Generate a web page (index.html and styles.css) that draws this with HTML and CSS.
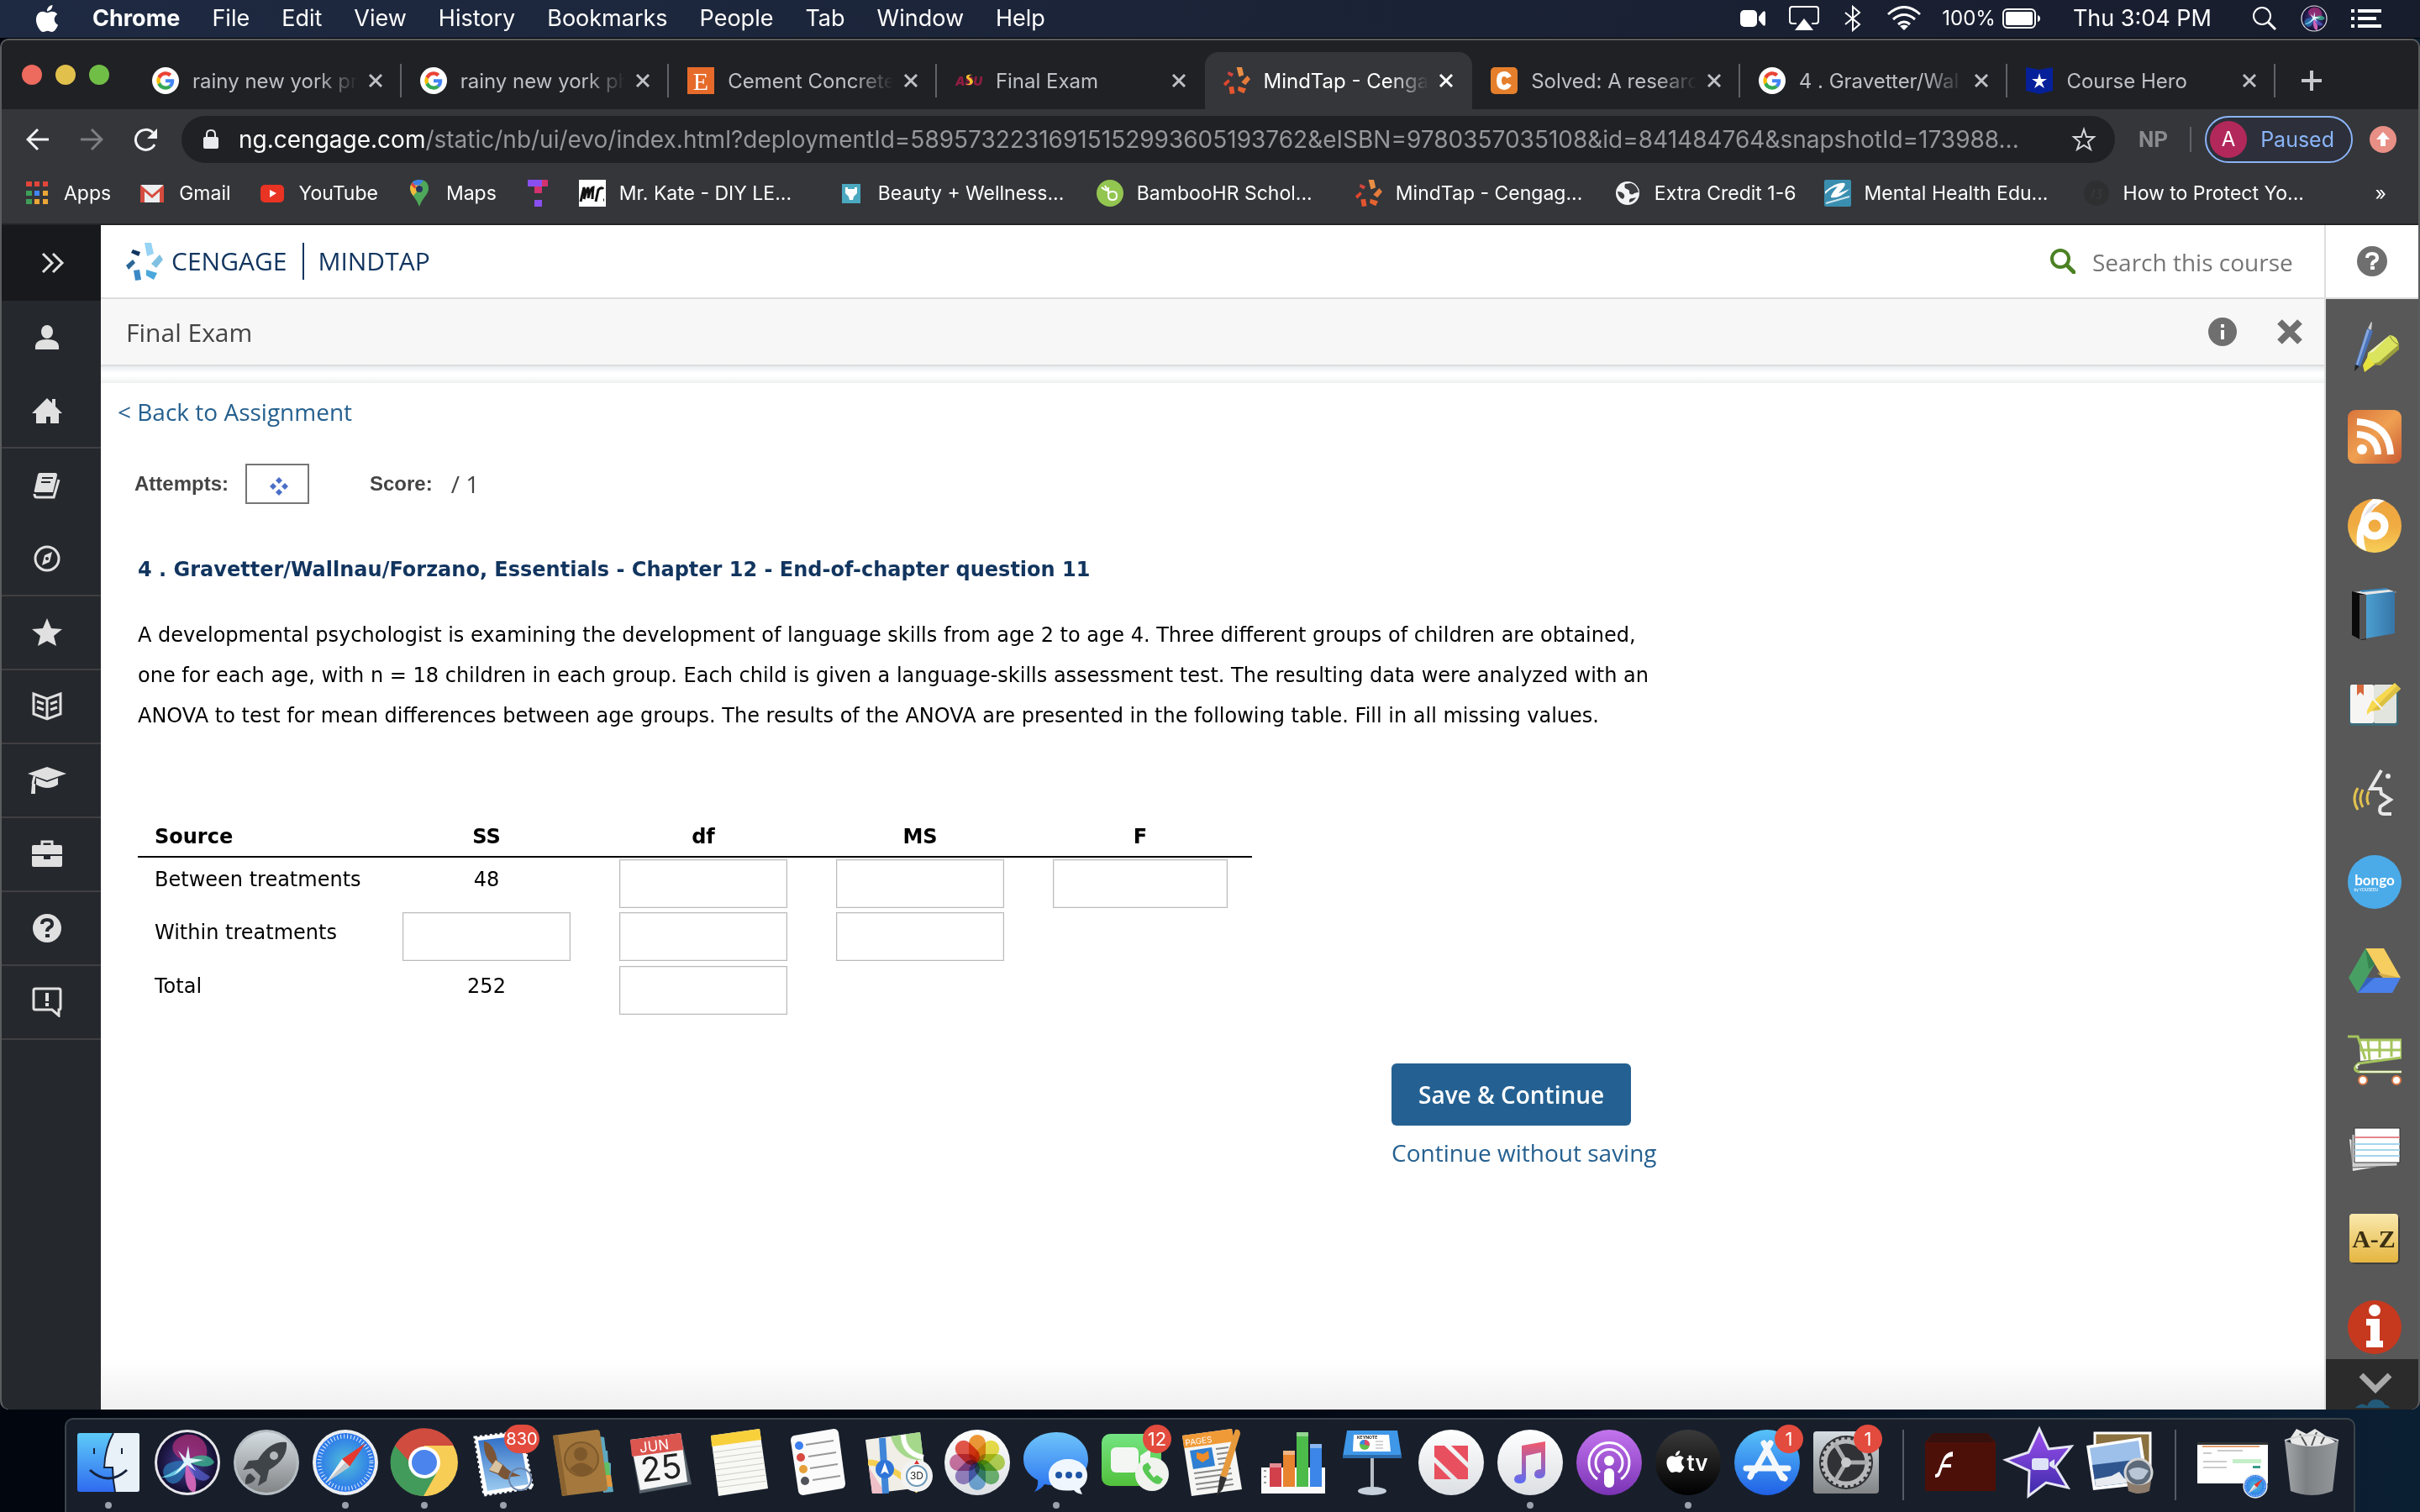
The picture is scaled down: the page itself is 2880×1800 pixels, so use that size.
FILE: index.html
```html
<!DOCTYPE html>
<html lang="en">
<head>
    <meta charset="UTF-8">
    <meta name="viewport" content="width=device-width, initial-scale=1.0">
    <title>MindTap - Cengage Learning</title>
    <link rel="stylesheet" href="styles.css">
</head>
<body>
    <!-- shared shapes and gradients -->
    <svg class="defs" width="0" height="0" aria-hidden="true">
        <defs>
            <symbol id="apple" viewBox="0 0 24 24"><path d="M12.152 6.896c-.948 0-2.415-1.078-3.96-1.04-2.04.027-3.91 1.183-4.961 3.014-2.117 3.675-.546 9.103 1.519 12.09 1.013 1.454 2.208 3.09 3.792 3.039 1.52-.065 2.09-.987 3.935-.987 1.831 0 2.35.987 3.96.948 1.637-.026 2.676-1.48 3.676-2.948 1.156-1.688 1.636-3.325 1.662-3.415-.039-.013-3.182-1.221-3.22-4.857-.026-3.04 2.48-4.494 2.597-4.559-1.429-2.09-3.623-2.324-4.39-2.376-2-.156-3.675 1.09-4.61 1.09zM15.53 3.83c.843-1.012 1.4-2.427 1.245-3.83-1.207.052-2.662.805-3.532 1.818-.78.896-1.454 2.338-1.273 3.714 1.338.104 2.715-.688 3.559-1.701"/></symbol>
            <symbol id="google" viewBox="-12 -12 72 72">
                <circle cx="24" cy="24" r="36" fill="#fff"/>
                <path fill="#ea4335" d="M24 9.5c3.54 0 6.71 1.22 9.21 3.6l6.85-6.85C35.9 2.38 30.47 0 24 0 14.62 0 6.51 5.38 2.56 13.22l7.98 6.19C12.43 13.72 17.74 9.5 24 9.5z"/>
                <path fill="#4285f4" d="M46.98 24.55c0-1.57-.15-3.09-.38-4.55H24v9.02h12.94c-.58 2.96-2.26 5.48-4.78 7.18l7.73 6c4.51-4.18 7.09-10.36 7.09-17.65z"/>
                <path fill="#fbbc05" d="M10.53 28.59c-.48-1.45-.76-2.99-.76-4.59s.27-3.14.76-4.59l-7.98-6.19C.92 16.46 0 20.12 0 24c0 3.88.92 7.54 2.56 10.78l7.97-6.19z"/>
                <path fill="#34a853" d="M24 48c6.48 0 11.93-2.13 15.89-5.81l-7.73-6c-2.15 1.45-4.92 2.3-8.16 2.3-6.26 0-11.57-4.22-13.47-9.91l-7.98 6.19C6.51 42.62 14.62 48 24 48z"/>
            </symbol>
            <symbol id="mindtap" viewBox="0 0 45 45">
                <path fill="#e98f45" d="M22 0h9l3 13-8 3z"/><path fill="#d6453d" d="M8 7l9 4-3 5-7-4z"/><path fill="#e0472e" d="M0 27l8-7 3 4-8 8z"/>
                <path fill="#e3552f" d="M9 33l8-1 2 12-8 1z"/><path fill="#e5632f" d="M25 32l13 4-4 8-10-5z"/><path fill="#e67c3b" d="M40 14l5 6-8 10-7-5z"/>
            </symbol>
            <symbol id="close" viewBox="0 0 18 18"><path d="M2 2l14 14M16 2L2 16" fill="none" stroke="currentColor" stroke-width="3"/></symbol>
            <symbol id="safari" viewBox="0 0 80 80">
                <circle cx="40" cy="40" r="39" fill="#eceef0"/><circle cx="40" cy="40" r="35" fill="url(#gSafari)"/>
                <circle cx="40" cy="40" r="31" fill="none" stroke="#e8f4ff" stroke-width="5" stroke-dasharray="1 3"/>
                <path d="M64 17L45 45l-9-9z" fill="#e5392f"/><path d="M17 64l19-28 9 9z" fill="#f2f2f2"/><path d="M17 64l28-19-5-5z" fill="#c3c8cc"/>
            </symbol>
            <symbol id="siri" viewBox="0 0 80 80">
                <circle cx="40" cy="40" r="39" fill="#e6e6ea"/><circle cx="40" cy="40" r="36" fill="url(#gSiri)"/>
                <path d="M40 39C20 34 14 14 38 7c18-3 32 14 22 32z" fill="#b5307d" opacity=".7"/>
                <path d="M40 39C20 36 6 44 13 58c9 15 24 6 27-19z" fill="#2b7fc0" opacity=".7"/>
                <path d="M40 39c8 12 13 26 9 36-10 2-15-20-9-36z" fill="#e06cc0" opacity=".9"/>
                <path d="M40 38c12-10 28-8 32 2-6 8-22 5-32-2z" fill="#3bb490" opacity=".8"/>
                <path d="M40 39l27 18c-6 10-24 4-27-18z" fill="#5a62d4" opacity=".7"/>
                <path d="M9 58Q28 50 40 39q-10 20-31 19z" fill="#74dff0" opacity=".8"/>
                <path d="M41 20l2 15 16 2-15 4 6 9-10-7-16 12 12-15-7-14 9 9z" fill="#e6fdff" opacity=".95"/>
            </symbol>
            <radialGradient id="gSiri"><stop stop-color="#4a3f9a"/><stop offset="1" stop-color="#130f30"/></radialGradient>
            <linearGradient id="gFinder" x2="0" y2="1"><stop stop-color="#5ecbf8"/><stop offset="1" stop-color="#2f6bf0"/></linearGradient>
            <linearGradient id="gSilver" x2="0" y2="1"><stop stop-color="#d5dde2"/><stop offset="1" stop-color="#828486"/></linearGradient>
            <radialGradient id="gSafari"><stop stop-color="#52c0d8"/><stop offset="1" stop-color="#2a74ea"/></radialGradient>
            <linearGradient id="gSky" x2="0" y2="1"><stop stop-color="#2f6dc4"/><stop offset="1" stop-color="#9ccbf0"/></linearGradient>
            <linearGradient id="gMsg" x2="0" y2="1"><stop stop-color="#6fc4fa"/><stop offset="1" stop-color="#2a72f0"/></linearGradient>
            <linearGradient id="gGreen" x2="0" y2="1"><stop stop-color="#74e482"/><stop offset="1" stop-color="#52c13c"/></linearGradient>
            <linearGradient id="gWhite" x2="0" y2="1"><stop stop-color="#fff"/><stop offset="1" stop-color="#dcdfe3"/></linearGradient>
            <linearGradient id="gNote" x2="0" y2="1"><stop stop-color="#f2586a"/><stop offset="1" stop-color="#5a6cf5"/></linearGradient>
            <linearGradient id="gPod" x2="0" y2="1"><stop stop-color="#c374ee"/><stop offset="1" stop-color="#7a33b5"/></linearGradient>
            <linearGradient id="gStore" x2="0" y2="1"><stop stop-color="#57c2f8"/><stop offset="1" stop-color="#2060e6"/></linearGradient>
            <linearGradient id="gTv" x2="0" y2="1"><stop stop-color="#3a3a3a"/><stop offset="1" stop-color="#000"/></linearGradient>
            <linearGradient id="gStar" x2="0" y2="1"><stop stop-color="#a050f0"/><stop offset="1" stop-color="#3a2aa8"/></linearGradient>
            <linearGradient id="gTrash"><stop stop-color="#a4a7aa"/><stop offset=".4" stop-color="#7d8083"/><stop offset="1" stop-color="#96999c"/></linearGradient>
            <linearGradient id="gRss" x2="1" y2="1"><stop stop-color="#d9743a"/><stop offset=".5" stop-color="#efa052"/><stop offset="1" stop-color="#c95a34"/></linearGradient>
            <linearGradient id="gSix" x2="0" y2="1"><stop stop-color="#efa53f"/><stop offset=".5" stop-color="#f0ab42"/><stop offset="1" stop-color="#f7cf58"/></linearGradient>
            <linearGradient id="gBook"><stop stop-color="#4b9fd0"/><stop offset="1" stop-color="#3775a8"/></linearGradient>
            <linearGradient id="gAz" x2="0" y2="1"><stop stop-color="#f9e9ae"/><stop offset="1" stop-color="#e5b53f"/></linearGradient>
        </defs>
    </svg>

    <header class="menubar">
        <nav class="menus">
            <a href="#" aria-label="Apple menu"><svg class="apple" width="32" height="34"><use href="#apple"/></svg></a>
            <a href="#" class="app-name">Chrome</a>
            <a href="#">File</a>
            <a href="#">Edit</a>
            <a href="#">View</a>
            <a href="#">History</a>
            <a href="#">Bookmarks</a>
            <a href="#">People</a>
            <a href="#">Tab</a>
            <a href="#">Window</a>
            <a href="#">Help</a>
        </nav>
        <div class="status">
            <svg width="30" height="22" viewBox="0 0 30 22"><rect y="1" width="20" height="20" rx="5" fill="#fff"/><path d="M22 9l5-6q3-2 3 2v12q0 4-3 2l-5-6z" fill="#fff"/></svg>
            <svg width="36" height="30" viewBox="0 0 36 30"><path d="M9 21H4q-3 0-3-3V4q0-3 3-3h28q3 0 3 3v14q0 3-3 3h-5" fill="none" stroke="#fff" stroke-width="2"/><path d="M18 15l11 14H7z" fill="#fff"/></svg>
            <svg width="24" height="32" viewBox="0 0 24 32"><path d="M3 9l17 14-8 7V2l8 7L3 23" fill="none" stroke="#fff" stroke-width="2"/></svg>
            <svg width="42" height="30" viewBox="0 0 42 30"><g fill="none" stroke="#fff" stroke-width="3"><path d="M2 10q19-17 38 0M8 16q13-11 26 0M14 22q7-6 14 0"/></g><path d="M16 24q5-3 10 0l-5 5z" fill="#fff"/></svg>
            <span class="battery">100%
                <svg width="46" height="24" viewBox="0 0 46 24"><rect x="1" y="1" width="38" height="22" rx="5" fill="none" stroke="#fff" stroke-width="2"/><rect x="4" y="4" width="32" height="16" rx="2" fill="#fff"/><path d="M42 8q3 1 3 4t-3 4z" fill="#fff"/></svg>
            </span>
            <time class="clock">Thu 3:04 PM</time>
            <svg width="30" height="30" viewBox="0 0 30 30"><circle cx="12" cy="12" r="10" fill="none" stroke="#fff" stroke-width="2"/><path d="M19 19l9 9" stroke="#fff" stroke-width="3"/></svg>
            <svg width="32" height="32"><use href="#siri"/></svg>
            <svg width="36" height="22" viewBox="0 0 36 22"><path d="M0 2h4M8 2h28M0 11h4M8 11h22M0 20h4M8 20h28" stroke="#fff" stroke-width="4"/></svg>
        </div>
    </header>

    <div class="window">
        <div class="tab-strip">
            <div class="lights"><i class="red"></i><i class="yellow"></i><i class="green"></i></div>
            <div class="tabs">
                <div class="tab"><svg class="favicon"><use href="#google"/></svg><span class="title">rainy new york pr</span><button aria-label="Close tab"><svg><use href="#close"/></svg></button></div>
                <div class="tab"><svg class="favicon"><use href="#google"/></svg><span class="title">rainy new york ph</span><button aria-label="Close tab"><svg><use href="#close"/></svg></button></div>
                <div class="tab"><svg class="favicon" viewBox="0 0 32 32"><rect width="32" height="32" fill="#e66b2b"/><text x="16" y="27" class="etsy">E</text></svg><span class="title">Cement Concrete</span><button aria-label="Close tab"><svg><use href="#close"/></svg></button></div>
                <div class="tab before-active"><svg class="favicon" viewBox="0 0 32 32"><text x="16" y="22" class="asu">ASU</text><path d="M20 9q-8-1-7 4 5 3 4 6-3 2-6 1 9 3 10-3-1-4-5-5 0-2 4-3z" fill="#f7c12d"/></svg><span class="title">Final Exam</span><button aria-label="Close tab"><svg><use href="#close"/></svg></button></div>
                <div class="tab active"><svg class="favicon"><use href="#mindtap"/></svg><span class="title">MindTap - Cenga</span><button aria-label="Close tab"><svg><use href="#close"/></svg></button></div>
                <div class="tab"><svg class="favicon" viewBox="0 0 32 32"><rect width="32" height="32" rx="5" fill="#e57f2c"/><path d="M22 12q-2-4-6-4-6 0-6 8t6 8q4 0 6-4" fill="none" stroke="#fff" stroke-width="6"/></svg><span class="title">Solved: A researc</span><button aria-label="Close tab"><svg><use href="#close"/></svg></button></div>
                <div class="tab"><svg class="favicon"><use href="#google"/></svg><span class="title">4 . Gravetter/Wal</span><button aria-label="Close tab"><svg><use href="#close"/></svg></button></div>
                <div class="tab"><svg class="favicon" viewBox="0 0 32 32"><path d="M0 0l16 3L32 0v28l-16 4L0 28z" fill="#06209a"/><path d="M16 7l2 7h7l-6 4 3 7-6-4-6 4 3-7-6-4h7z" fill="#fff"/></svg><span class="title">Course Hero</span><button aria-label="Close tab"><svg><use href="#close"/></svg></button></div>
            </div>
            <button class="new-tab" aria-label="New tab"><svg width="24" height="24" viewBox="0 0 24 24"><path d="M12 0v24M0 12h24" stroke="#c6c8cb" stroke-width="4"/></svg></button>
        </div>

        <div class="toolbar">
            <div class="nav-buttons">
                <button aria-label="Back"><svg width="28" height="28" viewBox="0 0 28 28"><path d="M27 14H3M14 2L2 14l12 12" fill="none" stroke="#f1f3f4" stroke-width="3"/></svg></button>
                <button aria-label="Forward"><svg width="28" height="28" viewBox="0 0 28 28"><path d="M1 14h24M14 2l12 12-12 12" fill="none" stroke="#7d7f82" stroke-width="3"/></svg></button>
                <button aria-label="Reload"><svg width="28" height="28" viewBox="0 0 28 28"><path d="M23 6a12 12 0 1 0 2 14" fill="none" stroke="#f1f3f4" stroke-width="3"/><path d="M28 1v12H16z" fill="#f1f3f4"/></svg></button>
            </div>
            <div class="omnibox">
                <svg width="18" height="24" viewBox="0 0 18 24"><path d="M4 10V6q0-5 5-5t5 5v4" fill="none" stroke="#e8eaed" stroke-width="2"/><rect y="9" width="18" height="14" rx="2" fill="#e8eaed"/></svg>
                <label for="url">ng.cengage.com</label>
                <input id="url" type="text" value="/static/nb/ui/evo/index.html?deploymentId=58957322316915152993605193762&amp;eISBN=9780357035108&amp;id=841484764&amp;snapshotId=173988...">
                <button aria-label="Bookmark this page"><svg width="30" height="30" viewBox="0 0 30 30"><path d="M15 3l3 9h9l-7 6 3 9-8-5-8 5 3-9-7-6h9z" fill="none" stroke="#d5d7da" stroke-width="2"/></svg></button>
            </div>
            <span class="extension">NP</span>
            <button class="profile"><span class="avatar">A</span>Paused</button>
            <button class="update" aria-label="Update"><svg width="32" height="32" viewBox="0 0 32 32"><circle cx="16" cy="16" r="16" fill="#e88f86"/><path d="M16 7l8 9h-5v8h-6v-8H8z" fill="#fff"/></svg></button>
        </div>

        <nav class="bookmarks">
            <a href="#"><svg viewBox="0 0 32 32"><g fill="#e2453a"><path d="M3 2h7v6H3zM13 2h6v6h-6zM23 2h6v6h-6z"/></g><path d="M3 13h7v6H3z" fill="#3f9e58"/><path d="M13 13h6v6h-6z" fill="#4285f4"/><path d="M23 13h6v6h-6zM13 23h6v6h-6zM23 23h6v6h-6z" fill="#eaa636"/><path d="M3 23h7v6H3z" fill="#3f9e58"/></svg>Apps</a>
            <a href="#"><svg viewBox="0 0 32 32"><rect x="2" y="6" width="28" height="21" rx="2" fill="#eceef0"/><path d="M2 27V6l14 12L30 6v21h-5V14l-9 8-9-8v13z" fill="#d54c3f"/></svg>Gmail</a>
            <a href="#"><svg viewBox="0 0 32 32"><rect x="2" y="6" width="28" height="21" rx="5" fill="#e93323"/><path d="M13 12l8 4-8 5z" fill="#fff"/></svg>YouTube</a>
            <a href="#"><svg viewBox="0 0 32 32"><path d="M16 0q11 0 11 11 0 4-5 10-4 5-6 11-2-6-6-11-5-6-5-10Q5 0 16 0z" fill="#4ea75a"/><path d="M16 0Q8 0 6 6l6 5 9-10q-2-1-5-1z" fill="#3f7fe8"/><path d="M6 6q-3 6 3 13l10-12z" fill="#f2bb3c"/><path d="M6 6l5 5 1-3-4-5z" fill="#e2453a"/><circle cx="16" cy="11" r="4" fill="#27365f"/></svg>Maps</a>
            <a href="#" aria-label="T" class="icon-only"><svg viewBox="0 0 32 32"><path d="M4 0h17v8H4zM12 24h9v8h-9z" fill="#8a4ff0"/><path d="M21 0h7v8h-7v8h-9V8h9z" fill="#d2326e"/></svg></a>
            <a href="#" class="cut"><svg viewBox="0 0 32 32"><rect width="32" height="32" fill="#fff"/><path d="M2 26L6 9q2 8 0 14 4-14 5-13 1 6 0 12 3-13 6-13-1 7-1 14M20 26l3-14q4-4 6-1M29 24h1" fill="none" stroke="#111" stroke-width="3"/></svg><span>Mr. Kate - DIY LE...</span></a>
            <a href="#" class="cut"><svg viewBox="0 0 32 32"><rect x="5" y="5" width="22" height="23" fill="#4aa9c0"/><path d="M9 9h3v2h8V9h3v7l-4 4-1 4h-4l-1-4-4-4z" fill="#fff"/></svg><span>Beauty + Wellness...</span></a>
            <a href="#" class="cut"><svg viewBox="0 0 32 32"><circle cx="16" cy="16" r="16" fill="#93c551"/><path d="M14 9v10q0 5 5 5t5-5-5-5-5 4M6 9q3 3 7 4M10 7l3 6" fill="none" stroke="#fff" stroke-width="2"/></svg><span>BambooHR Schol...</span></a>
            <a href="#" class="cut"><svg><use href="#mindtap"/></svg><span>MindTap - Cengag...</span></a>
            <a href="#"><svg viewBox="0 0 32 32"><circle cx="16" cy="16" r="14" fill="#f1f3f4"/><path d="M4 14q6 0 8 4 1 3-2 5-5-2-6-9zM13 5q-2 5 2 6 4 1 3 5 3 3 6 0 3-1 5-1-2-9-9-11zM18 27q-1-5 4-5l4-1q-3 5-8 6z" fill="#3c3d41"/></svg>Extra Credit 1-6</a>
            <a href="#" class="cut"><svg viewBox="0 0 32 32"><rect width="32" height="32" rx="2" fill="#3a8fb0"/><path d="M1 14q14-12 23-10 3 2-7 12 6-2 13-5-12 12-22 10-1-3 8-13-8 1-15 9z" fill="#fff"/><path d="M2 28l28-8" stroke="#cfe6ee" stroke-width="2"/></svg><span>Mental Health Edu...</span></a>
            <a href="#" class="cut"><svg viewBox="0 0 32 32"><circle cx="16" cy="16" r="15" fill="#2e2f31"/><path d="M10 22l4-11M17 12h4l-2 4q4 1 1 6h-4" stroke="#37383a" stroke-width="2" fill="none"/></svg><span>How to Protect Yo...</span></a>
            <button aria-label="More bookmarks">»</button>
        </nav>

        <div class="page">
            <nav class="rail">
                <button class="expand" aria-label="Expand"><svg width="28" height="24" viewBox="0 0 28 24"><path d="M2 1l11 11L2 23M14 1l11 11-11 11" fill="none" stroke="#e0e0e0" stroke-width="3"/></svg></button>
                <a href="#" aria-label="Profile"><svg viewBox="0 0 36 36"><ellipse cx="18" cy="11" rx="7" ry="8" fill="#e0e0e0"/><path d="M4 32v-4q1-8 14-8t14 8v4z" fill="#e0e0e0"/></svg></a>
                <a href="#" class="line" aria-label="Home"><svg viewBox="0 0 36 36"><path d="M18 3l6 6V4h4v9l8 8h-4v12H22v-8h-5v8H5V21H0z" fill="#e0e0e0"/></svg></a>
                <a href="#" aria-label="Book"><svg viewBox="0 0 36 36"><path d="M9 3h19q2 0 2 3l-5 20H4q-2 0-1-3L7 5q1-2 2-2z" fill="#e0e0e0"/><path d="M12 9h13M11 14h11" stroke="#25282d" stroke-width="2"/><path d="M3 28q0 4 3 4h20l6-21" fill="none" stroke="#e0e0e0" stroke-width="3"/></svg></a>
                <a href="#" class="line" aria-label="Explore"><svg viewBox="0 0 36 36"><circle cx="18" cy="18" r="14" fill="none" stroke="#e0e0e0" stroke-width="3"/><path d="M24 10l-3 12-9 4 3-12z" fill="#e0e0e0"/><circle cx="18" cy="18" r="2" fill="#25282d"/></svg></a>
                <a href="#" class="line" aria-label="Favorites"><svg viewBox="0 0 36 36"><path d="M18 1l5 12 13 1-10 8 3 12-11-6-11 6 3-12L0 14l13-1z" fill="#e0e0e0"/></svg></a>
                <a href="#" class="line" aria-label="Reader"><svg viewBox="0 0 36 36"><path d="M2 3l16 6 16-6v24l-16 6-16-6zM18 9v24" fill="none" stroke="#e0e0e0" stroke-width="3"/><path d="M6 12l8 3M6 19l8 3M30 12l-8 3M30 19l-8 3" stroke="#e0e0e0" stroke-width="3"/></svg></a>
                <a href="#" class="line" aria-label="Courses"><svg class="wide" viewBox="0 0 46 36"><path d="M23 2l23 8-23 8L0 10z" fill="#e0e0e0"/><path d="M10 15l13 5 13-5v8q-12 8-26 0z" fill="#e0e0e0"/><path d="M8 13L6 22" stroke="#e0e0e0" stroke-width="3"/><path d="M5 22h4v12H4z" fill="#e0e0e0"/></svg></a>
                <a href="#" class="line" aria-label="Career"><svg viewBox="0 0 36 36"><path d="M12 7V3h12v4" fill="none" stroke="#e0e0e0" stroke-width="3"/><path d="M2 7h32q2 0 2 2v9H0V9q0-2 2-2zM0 20h14v4h8v-4h14v11q0 2-2 2H2q-2 0-2-2z" fill="#e0e0e0"/></svg></a>
                <a href="#" class="line" aria-label="Help"><svg viewBox="0 0 36 36"><circle cx="18" cy="18" r="17" fill="#e0e0e0"/><path d="M12 13q0-5 6-5t6 5q0 3-3 4-3 2-3 5" fill="none" stroke="#25282d" stroke-width="4"/><path d="M16 25h5v4h-5z" fill="#25282d"/></svg></a>
                <a href="#" class="line" aria-label="Feedback"><svg viewBox="0 0 36 36"><path d="M4 2h28q2 0 2 2v21q0 2-2 2v7l-8-7H4q-2 0-2-2V4q0-2 2-2z" fill="none" stroke="#e0e0e0" stroke-width="3"/><path d="M16 7h4v10h-4zM16 19h4v4h-4z" fill="#e0e0e0"/></svg></a>
            </nav>

            <div class="course">
                <div class="course-bar">
                    <a href="#" class="brand">
                        <svg width="45" height="45" viewBox="0 0 45 45"><path fill="#96d3f5" d="M22 0h8l3 13-8 3z"/><path fill="#12355f" d="M8 8l9 3-2 5-9-4z"/><path fill="#2b6797" d="M0 27l8-7 3 4-8 8z"/><path fill="#3a88c6" d="M9 33l7-1 2 12-7 1z"/><path fill="#4aa8dc" d="M24 32l13 4-4 8-9-5z"/><path fill="#80c1e2" d="M40 14l4 6-8 10-6-5z"/></svg>
                        <span>CENGAGE</span><span class="product">MINDTAP</span>
                    </a>
                    <div class="search">
                        <label for="search"><svg width="30" height="30" viewBox="0 0 30 30"><circle cx="12" cy="12" r="10" fill="none" stroke="#4b8123" stroke-width="4"/><path d="M20 20l8 8" stroke="#4b8123" stroke-width="5" stroke-linecap="round"/></svg></label>
                        <input id="search" type="search" placeholder="Search this course">
                    </div>
                </div>
                <div class="title-bar">
                    <h1>Final Exam</h1>
                    <button aria-label="Information"><svg width="34" height="34" viewBox="0 0 34 34"><circle cx="17" cy="17" r="17" fill="#6f6f6f"/><path d="M15 8h4v4h-4zM15 15h4v11h-4z" fill="#fff"/></svg></button>
                    <button aria-label="Close"><svg width="30" height="30" viewBox="0 0 30 30"><path d="M3 3l24 24M27 3L3 27" stroke="#6f6f6f" stroke-width="8"/></svg></button>
                </div>

                <main class="exam">
                    <a href="#" class="back">&lt; Back to Assignment</a>
                    <div class="attempts">
                        <b>Attempts:</b>
                        <span class="attempt-box"><svg width="22" height="22" viewBox="0 0 22 22"><path d="M11 0l4 4-4 4-4-4zM11 14l4 4-4 4-4-4zM4 7l4 4-4 4-4-4zM18 7l4 4-4 4-4-4z" fill="#4a6fc8"/></svg></span>
                        <b>Score:</b>
                        <span class="score">/ 1</span>
                    </div>
                    <h2>4 . Gravetter/Wallnau/Forzano, Essentials - Chapter 12 - End-of-chapter question 11</h2>
                    <p>A developmental psychologist is examining the development of language skills from age 2 to age 4. Three different groups of children are obtained, one for each age, with n = 18 children in each group. Each child is given a language-skills assessment test. The resulting data were analyzed with an ANOVA to test for mean differences between age groups. The results of the ANOVA are presented in the following table. Fill in all missing values.</p>
                    <table>
                        <thead>
                            <tr><th scope="col">Source</th><th scope="col">SS</th><th scope="col">df</th><th scope="col">MS</th><th scope="col">F</th></tr>
                        </thead>
                        <tbody>
                            <tr>
                                <th scope="row">Between treatments</th>
                                <td>48</td>
                                <td><input type="text" aria-label="Between treatments df"></td>
                                <td><input type="text" aria-label="Between treatments MS"></td>
                                <td><input type="text" class="f-value" aria-label="Between treatments F"></td>
                            </tr>
                            <tr>
                                <th scope="row">Within treatments</th>
                                <td><input type="text" aria-label="Within treatments SS"></td>
                                <td><input type="text" aria-label="Within treatments df"></td>
                                <td><input type="text" aria-label="Within treatments MS"></td>
                                <td></td>
                            </tr>
                            <tr>
                                <th scope="row">Total</th>
                                <td>252</td>
                                <td><input type="text" aria-label="Total df"></td>
                                <td></td>
                                <td></td>
                            </tr>
                        </tbody>
                    </table>
                    <div class="actions">
                        <button>Save &amp; Continue</button>
                        <a href="#">Continue without saving</a>
                    </div>
                </main>
            </div>

            <aside class="apps">
                <a href="#" class="help" aria-label="Help"><svg width="36" height="36" viewBox="0 0 36 36"><circle cx="18" cy="18" r="18" fill="#6f6f6f"/><path d="M12 14q0-5 6-5t6 5q0 3-3 4-3 1-3 5" fill="none" stroke="#fff" stroke-width="4"/><path d="M16 24h5v4h-5z" fill="#fff"/></svg></a>
                <div class="app-list">
                    <a href="#" aria-label="Notes and highlights"><svg viewBox="0 0 64 64"><path d="M23 9l7 3-15 42-5 3-1-5z" fill="#4a73b8"/><path d="M23 10l3 1-14 42-2-1z" fill="#88a7dc"/><path d="M9 52l5 2-6 6z" fill="#222"/><path d="M24 9l4-8 1 1-1 9z" fill="#c9cbcd"/><path d="M50 17q8 0 11 11L38 52H27l-4-6 1-8z" fill="#dbe45e"/><path d="M61 28v6L39 53l-12-1 10-3z" fill="#9a9e3c"/><path d="M50 17l-20 20-5 1z" fill="#f0f0c8"/><path d="M24 42l8 10-12 9-2-8z" fill="#e8e23f"/><path d="M50 18q5 9 11 10" fill="none" stroke="#7d8032" stroke-width="1"/></svg></a>
                    <a href="#" aria-label="RSS feed"><svg viewBox="0 0 64 64"><rect width="64" height="64" rx="9" fill="url(#gRss)"/><circle cx="17" cy="47" r="6" fill="#fff"/><path d="M11 29q24 1 25 24M11 14q38 2 40 39" fill="none" stroke="#fff" stroke-width="8"/></svg></a>
                    <a href="#" aria-label="Study tool"><svg viewBox="0 0 64 64"><circle cx="32" cy="32" r="32" fill="url(#gSix)"/><circle cx="32" cy="32" r="12" fill="none" stroke="#fff" stroke-width="9"/><path d="M30 0q8 0 14 2-12 6-19 18-10 18-3 42-6-2-11-7-2-16 4-29 3-18 15-26z" fill="#fff"/><path d="M30 6q-8 6-12 18 3-6 10-9 2-6 8-10z" fill="#e3e3e8"/></svg></a>
                    <a href="#" aria-label="Textbook"><svg viewBox="0 0 64 64"><path d="M6 5l40-4 12 4-34 7z" fill="#e7e7e7"/><path d="M14 3l32-3 3 2-32 3z" fill="#3d88b8"/><path d="M5 4l17 4v53l-6 1L5 56z" fill="#0a0a0a"/><path d="M14 8h9v52l-9 2z" fill="#555"/><path d="M22 8l34-4v50l-34 6z" fill="url(#gBook)"/></svg></a>
                    <a href="#" aria-label="Notebook"><svg viewBox="0 0 64 64"><rect x="2" y="10" width="58" height="48" rx="3" fill="#3c6c7a"/><rect x="3" y="9" width="28" height="46" rx="2" fill="#f7f5f3"/><rect x="31" y="9" width="27" height="46" rx="2" fill="#e2e4de"/><path d="M11 9h8v13l-4-4-4 4z" fill="#d5673a"/><path d="M56 7l7 7-22 21-2 4-12 2-4 4v-5l6-12 3-1z" fill="#f7d850"/><path d="M63 14L41 35l-3 4-9 1 30-30z" fill="#dcc043"/><path d="M30 26l11 12" stroke="#f7f5f3" stroke-width="2"/></svg></a>
                    <a href="#" aria-label="Read aloud"><svg viewBox="0 0 64 64"><path d="M40 5L27 27h12l1 6 11 7-12 8q-3 9 4 9h9" fill="none" stroke="#e8e8e8" stroke-width="4"/><circle cx="48" cy="12" r="3" fill="#e8e8e8"/><path d="M12 26q-8 13 0 26M18 28q-6 11 0 21M25 30q-4 9 0 16" fill="none" stroke="#e3c24f" stroke-width="3"/></svg></a>
                    <a href="#" aria-label="Bongo"><svg viewBox="0 0 64 64"><circle cx="32" cy="32" r="32" fill="#4babe9"/><text x="32" y="36" class="bongo">bongo</text><text x="22" y="43" class="byline">by YOUSEEU</text></svg></a>
                    <a href="#" aria-label="Drive"><svg viewBox="0 0 64 64"><path d="M21 5h22l20 35H42z" fill="#f6ce5f"/><path d="M21 5l11 19-20 34L1 40z" fill="#489f63"/><path d="M23 40h40L53 58H12z" fill="#4a80ea"/><path d="M21 5l4 25 7-6z" fill="#35824e"/><path d="M12 58l20-18h-9z" fill="#3561be"/><path d="M35 34l28 6H42z" fill="#d3ac4c"/></svg></a>
                    <a href="#" aria-label="Store"><svg viewBox="0 0 64 64"><path d="M14 8h50v21L15 33z" fill="#fff"/><path d="M0 4h12l9 27M12 8h52v21L13 36q-9 7 0 10h51M14 20h50M24 8l2 24M38 8v21M52 8v20" fill="none" stroke="#a4c45c" stroke-width="3"/><path d="M12 42q-4-3 2-5" stroke="#f1f6df" stroke-width="2" fill="none"/><path d="M14 46h50" stroke="#eaf2cd" stroke-width="2"/><circle cx="18" cy="56" r="5" fill="#fff" stroke="#dd7a45" stroke-width="2"/><circle cx="58" cy="56" r="5" fill="#fff" stroke="#dd7a45" stroke-width="2"/></svg></a>
                    <a href="#" aria-label="Flashcards"><svg viewBox="0 0 64 64"><path d="M2 20l54 20 2 9L6 58z" fill="#e6e6e6"/><path d="M5 14l54 10v28l-54 2z" fill="#d0d0d0" stroke="#555"/><path d="M8 7h54v41H8z" fill="#fff" stroke="#333"/><path d="M8 18h54" stroke="#e3888b" stroke-width="2"/><path d="M8 26h54M8 33h54M8 40h54" stroke="#a5d5ec" stroke-width="2"/></svg></a>
                    <a href="#" aria-label="Glossary"><svg viewBox="0 0 64 64"><rect x="4" y="5" width="58" height="58" rx="5" fill="#3e3e3e"/><rect x="2" y="3" width="58" height="58" rx="4" fill="url(#gAz)"/><text x="31" y="43" class="az">A-Z</text></svg></a>
                    <a href="#" aria-label="Info"><svg viewBox="0 0 64 64"><circle cx="32" cy="32" r="32" fill="#c6391f"/><circle cx="32" cy="12" r="7" fill="#fff"/><path d="M22 22h16v26h4v8H22v-8h5V30h-5z" fill="#fff"/></svg></a>
                </div>
                <button class="more" aria-label="More apps"><svg width="64" height="60" viewBox="0 0 64 60"><path d="M17 19l17 17 17-17" fill="none" stroke="#a9a9a9" stroke-width="7"/><path d="M10 58q8-8 14-2 3-8 10-8 9 0 11 6 6 2 6 4z" fill="#235a7a"/></svg></button>
            </aside>
        </div>
    </div>

    <nav class="dock">
        <a href="#" class="open" aria-label="Finder"><svg viewBox="0 0 80 80"><rect x="3" y="5" width="74" height="70" rx="3" fill="url(#gFinder)"/><path d="M46 5h28q3 0 3 3v64q0 3-3 3H48q-2-13-2-29H34Q36 22 46 5z" fill="#e8f0f8"/><path d="M46 5Q36 22 35 46h10q0 14 3 29M23 23v7M56 23v7" fill="none" stroke="#14213a" stroke-width="2"/><path d="M18 49q22 20 44 0" fill="none" stroke="#14213a" stroke-width="3"/></svg></a>
        <a href="#" aria-label="Siri"><svg><use href="#siri"/></svg></a>
        <a href="#" aria-label="Launchpad"><svg viewBox="0 0 80 80"><circle cx="40" cy="40" r="39" fill="#b6bec3"/><circle cx="40" cy="40" r="36" fill="url(#gSilver)"/><path d="M64 16q-20-2-34 21l-11 1-7 11 12-2 9 9-3 12 10-6 3-13Q66 36 64 16z" fill="#3f4448"/><circle cx="49" cy="32" r="5" fill="#b2b9bd"/><path d="M21 53q-7 2-6 13 10-1 12-7z" fill="#3f4448"/></svg></a>
        <a href="#" class="open" aria-label="Safari"><svg><use href="#safari"/></svg></a>
        <a href="#" class="open" aria-label="Chrome"><svg viewBox="0 0 80 80"><circle cx="40" cy="40" r="40" fill="#f8cd56"/><path d="M5 20A40 40 0 0 1 75 20H40L23 50z" fill="#cf4c3f"/><path d="M5 20a40 40 0 0 0 34 60l17-30-16-10H23z" fill="#429b5b"/><circle cx="40" cy="40" r="19" fill="#fff"/><circle cx="40" cy="40" r="15" fill="#4b84ec"/></svg></a>
        <a href="#" class="open" aria-label="Mail"><svg viewBox="0 0 80 80"><path d="M6 10l56-7 13 67-58 9z" fill="#fff" stroke="#fff" stroke-width="3" stroke-dasharray="3 3"/><path d="M10 14l49-6 11 58-49 8z" fill="url(#gSky)"/><path d="M17 15q12 2 16 23l7 5q6 8 21 13l-12 1q-4 8-16-3l-10-4 4-8q-11-9-10-27z" fill="#7b5537"/><path d="M31 37l8 6-5 10-11-4z" fill="#d8c3a0"/><circle cx="60" cy="60" r="13" fill="none" stroke="#6a83a8" stroke-width="2"/></svg><span class="badge wide">830</span></a>
        <a href="#" aria-label="Contacts"><svg viewBox="0 0 80 80"><path d="M60 9l6 1 2 16 2 0 1 14 3 1v14l3 20-12 1z" fill="#5fa8c0"/><path d="M66 40h6l1 15h-6z" fill="#5fbf62"/><path d="M68 55h6l2 14h-7z" fill="#e2983d"/><path d="M5 8l52-7q4 0 4 4l9 65q0 4-4 4l-50 6z" fill="#a5793d"/><path d="M5 8l6-1 11 72-6 1z" fill="#8a6330"/><circle cx="39" cy="36" r="20" fill="#9a6f38" stroke="#7d582b" stroke-width="2"/><circle cx="38" cy="30" r="8" fill="#7d582b"/><path d="M25 48q13-15 28 0-12 15-28 0z" fill="#7d582b"/></svg></a>
        <a href="#" aria-label="Calendar"><svg viewBox="0 0 80 80"><path d="M3 13l60-8 13 61-62 11z" fill="#59646c"/><path d="M3 13l60-8 8 58-56 10z" fill="#f6f6f6"/><path d="M3 13l60-8 3 20-61 8z" fill="#dc5650"/><g transform="rotate(-7 36 40)"><text x="34" y="26" class="cal-month">JUN</text><text x="39" y="61" class="cal-day">25</text></g></svg></a>
        <a href="#" aria-label="Notes"><svg viewBox="0 0 80 80"><path d="M5 8l58-8 10 71-59 9z" fill="#f8f8f4"/><path d="M5 8l58-8 2 13-59 8z" fill="#f8d03c"/><path d="M7 28l59-8M8 35l59-8M9 42l59-8M10 49l59-8M11 56l59-8M12 63l59-8M13 70l59-8" stroke="#cfcfc8"/></svg></a>
        <a href="#" aria-label="Reminders"><svg viewBox="0 0 80 80"><path d="M10 8l47-8q5 0 6 5l8 60q0 5-4 6l-46 8q-5 0-6-5L6 14q0-5 4-6z" fill="#fbfbfb"/><path d="M24 19l33-5M27 33l33-5M29 47l33-5M32 61l33-5" stroke="#999" stroke-width="2"/><circle cx="16" cy="20" r="5" fill="#3b7ef0"/><circle cx="18" cy="34" r="5" fill="#d64a42"/><circle cx="21" cy="48" r="5" fill="#e6a03a"/><circle cx="23" cy="62" r="5" fill="#50545a"/></svg></a>
        <a href="#" aria-label="Maps"><svg viewBox="0 0 80 80"><path d="M1 13l65-9 8 65-65 8z" fill="#f0eee6"/><path d="M31 9l35-5 4 33q-30 2-39-28z" fill="#a6d88c"/><path d="M46 7q0 22 24 27" stroke="#fff" stroke-width="6" fill="none"/><path d="M4 40q25 0 60 34" stroke="#f4cf52" stroke-width="7" fill="none"/><path d="M5 46l20 31-16 0z" fill="#efc0c8"/><path d="M21 11l4 66" stroke="#3f86d8" stroke-width="8"/><circle cx="24" cy="48" r="11" fill="#2f74d8"/><path d="M24 40l5 14-5-3-5 3z" fill="#fff"/><circle cx="62" cy="56" r="19" fill="#f3f3f3"/><circle cx="62" cy="56" r="12" fill="#fff" stroke="#6d98b5" stroke-width="2"/><text x="62" y="60" class="threed">3D</text><path d="M62 37l3 5h-6z" fill="#d33"/></svg></a>
        <a href="#" aria-label="Photos"><svg viewBox="0 0 80 80"><circle cx="40" cy="40" r="39" fill="url(#gWhite)"/><g class="petals"><rect x="30" y="7" width="20" height="33" rx="10" fill="#f09a37"/><rect x="30" y="7" width="20" height="33" rx="10" fill="#ece04a" transform="rotate(45 40 40)"/><rect x="30" y="7" width="20" height="33" rx="10" fill="#b9d755" transform="rotate(90 40 40)"/><rect x="30" y="7" width="20" height="33" rx="10" fill="#74bd77" transform="rotate(135 40 40)"/><rect x="30" y="7" width="20" height="33" rx="10" fill="#78b1e0" transform="rotate(180 40 40)"/><rect x="30" y="7" width="20" height="33" rx="10" fill="#9d88c8" transform="rotate(225 40 40)"/><rect x="30" y="7" width="20" height="33" rx="10" fill="#d077a6" transform="rotate(270 40 40)"/><rect x="30" y="7" width="20" height="33" rx="10" fill="#e8584a" transform="rotate(315 40 40)"/></g></svg></a>
        <a href="#" class="open" aria-label="Messages"><svg viewBox="0 0 80 80"><path d="M40 4c22 0 38 14 38 32S62 68 40 68l-14-2q-4 6-12 9 5-6 4-14Q1 52 1 36C1 18 18 4 40 4z" fill="url(#gMsg)"/><path d="M54 36c13 0 23 8 23 19 0 8-4 13-9 16l3 7q-7-1-10-5-30 4-30-18c0-11 10-19 23-19z" fill="#eff6fd"/><circle cx="43" cy="55" r="4" fill="#1e55a5"/><circle cx="55" cy="55" r="4" fill="#1e55a5"/><circle cx="67" cy="55" r="4" fill="#1e55a5"/></svg></a>
        <a href="#" aria-label="FaceTime"><svg viewBox="0 0 80 80"><rect y="6" width="71" height="62" rx="10" fill="url(#gGreen)"/><rect x="11" y="22" width="33" height="30" rx="6" fill="#f4f6f4"/><path d="M46 32l12-8v22l-12-6z" fill="#f4f6f4"/><circle cx="60" cy="54" r="20" fill="#f0f3ee"/><path d="M50 43q-4 5 5 15t15 7l3-5-7-5-4 3-6-8 3-4-4-6z" fill="#57c853"/></svg><span class="badge">12</span></a>
        <a href="#" aria-label="Pages"><svg viewBox="0 0 80 80"><path d="M2 8l59-8 12 72-60 8z" fill="#f6f6f4"/><path d="M2 8l59-8 3 15-60 8z" fill="#f09a37"/><text x="22" y="18" class="pages" transform="rotate(-8 22 18)">PAGES</text><path d="M11 26l26-4 4 22-26 4z" fill="#2f7fd2"/><path d="M19 28l8 2 6-4 1 9-8 5-7-5z" fill="#f08c2a"/><path d="M42 24l15-2M43 30l15-2M44 36l15-2M45 42l15-2M16 53l44-6M17 59l44-6M18 66l44-6M19 72l44-6" stroke="#888" stroke-width="2"/><path d="M65 1q6-1 6 5L55 57h-8z" fill="#e79a3c"/><path d="M47 56l8 2-5 14-7 8z" fill="#333"/></svg></a>
        <a href="#" aria-label="Numbers"><svg viewBox="0 0 80 80"><path d="M2 46h76v31H2z" fill="#fafafa"/><rect x="12" y="41" width="14" height="28" fill="#d2404c"/><rect x="28" y="26" width="14" height="43" fill="#e8832f"/><rect x="44" y="4" width="14" height="65" fill="#4dbb4a"/><rect x="60" y="18" width="14" height="51" fill="#3b86e8"/><path d="M12 41h14v5H12zM28 26h14v5H28zM44 4h14v5H44zM60 18h14v5H60z" fill="#fff" opacity=".4"/><path d="M5 50h3M5 57h3M5 64h3" stroke="#999" stroke-width="2"/></svg></a>
        <a href="#" aria-label="Keynote"><svg viewBox="0 0 80 80"><path d="M38 30h4v43h-4z" fill="#b9bec6"/><ellipse cx="40" cy="74" rx="17" ry="5" fill="#c6d0dc"/><path d="M10 2h60l5 31H5z" fill="#3f97e8"/><path d="M5 31h70v4H5z" fill="#2b6aa8"/><path d="M18 7h42l2 20H17z" fill="#fff"/><text x="22" y="12" class="keynote">KEYNOTE</text><circle cx="31" cy="19" r="6" fill="#5fbf4a"/><path d="M31 19v-6a6 6 0 0 1 6 7z" fill="#e04a6a"/><path d="M31 19l-6-1a6 6 0 0 1 6-5z" fill="#3a88e0"/><path d="M44 15h9M44 19h9M44 23h9" stroke="#aaa"/></svg></a>
        <a href="#" aria-label="News"><svg viewBox="0 0 80 80"><circle cx="40" cy="40" r="39" fill="url(#gWhite)"/><path d="M20 20h12l28 27v13H48L20 33z" fill="#e8505f"/><path d="M20 40l20 20H20zM40 20h20v20z" fill="#e8505f"/></svg></a>
        <a href="#" class="open" aria-label="Music"><svg viewBox="0 0 80 80"><circle cx="40" cy="40" r="39" fill="url(#gWhite)"/><path d="M30 20l28-5v37q0 7-7 7-6 0-6-5 0-6 8-6V28l-18 4v26q0 7-7 7-7 0-7-5 0-6 9-6z" fill="url(#gNote)"/></svg></a>
        <a href="#" aria-label="Podcasts"><svg viewBox="0 0 80 80"><circle cx="40" cy="40" r="39" fill="url(#gPod)"/><g fill="none" stroke="#fff" stroke-width="3"><path d="M26 60a24 24 0 1 1 28 0M29 52a16 16 0 1 1 22 0"/></g><circle cx="40" cy="38" r="6" fill="#fff"/><rect x="34" y="47" width="12" height="23" rx="6" fill="#fff"/></svg></a>
        <a href="#" class="open" aria-label="Apple TV"><svg viewBox="0 0 80 80"><circle cx="40" cy="40" r="39" fill="url(#gTv)"/><svg x="12" y="26" width="26" height="26" fill="#fff"><use href="#apple"/></svg><text x="51" y="50" class="tv">tv</text></svg></a>
        <a href="#" aria-label="App Store"><svg viewBox="0 0 80 80"><circle cx="40" cy="40" r="39" fill="url(#gStore)"/><path d="M36 17l22 41M44 17L26 49M15 47h50M20 57l2-4M58 56l3 3" stroke="#f5f8fb" stroke-width="7" stroke-linecap="round"/></svg><span class="badge">1</span></a>
        <a href="#" aria-label="System Preferences"><svg viewBox="0 0 80 80"><rect x="1" y="3" width="78" height="74" rx="4" fill="url(#gSilver)"/><circle cx="40" cy="40" r="32" fill="#303236"/><circle cx="40" cy="40" r="25" fill="none" stroke="#b7b9bb" stroke-width="5"/><circle cx="40" cy="40" r="28" fill="none" stroke="#b7b9bb" stroke-width="4" stroke-dasharray="4 3"/><path d="M40 40h26M40 40L27 18M40 40L27 62" stroke="#a9abad" stroke-width="5"/><circle cx="40" cy="40" r="6" fill="#c7c9cb"/></svg><span class="badge">1</span></a>
        <hr>
        <a href="#" aria-label="Flash"><svg viewBox="0 0 80 80"><path d="M8 5h64l10 11v58H-2V16z" fill="#4d1008"/><path d="M8 5h64l8 11H0z" fill="#35100c"/><path d="M31 33q-9 0-11 9l-4 12q-1 4-6 4v-4q3 0 4-4l5-13q3-9 12-10z" fill="#fff"/><path d="M17 42h12v4H16z" fill="#fff"/></svg></a>
        <a href="#" aria-label="iMovie"><svg viewBox="0 0 80 80"><path d="M40 0l11 24 27-3-19 24 15 25-26-6-21 16 1-30L0 37l27-9z" fill="url(#gStar)" stroke="#e6e6f2" stroke-width="3"/><rect x="31" y="35" width="20" height="14" rx="3" fill="#dfe3f8"/><path d="M52 40l6-4v12l-6-4z" fill="#dfe3f8"/></svg></a>
        <a href="#" aria-label="Preview"><svg viewBox="0 0 80 80"><path d="M12 5h66v45H12z" fill="#8a713f" stroke="#fff" stroke-width="3"/><path d="M2 20l65-10 9 56-66 7z" fill="#fff"/><path d="M6 23l58-9 7 48-58 7z" fill="#9dc0ea"/><path d="M9 43l58-7 4 26-58 7z" fill="#2f568f"/><path d="M12 60l20-4 9-5 6 8 22 3-56 7z" fill="#e8ecf0"/><circle cx="64" cy="52" r="16" fill="#5d6a7a" stroke="#d4d4d4" stroke-width="3"/><path d="M50 62l2 12q13 6 25 0l2-12q-15 10-29 0z" fill="#8d7c6c"/><path d="M52 50q10-8 24 0l-6 9q-9 4-15-2z" fill="#b9c6d6"/></svg></a>
        <hr>
        <a href="#" aria-label="Minimized Safari window"><svg viewBox="0 0 80 80"><path d="M-2 16h84v49H-2z" fill="#fff"/><path d="M-2 16h84v3H-2z" fill="#333"/><path d="M4 21h68" stroke="#e8a070" stroke-width="2"/><path d="M5 29h10M22 26h30M5 39h28M5 46h28" stroke="#ccc" stroke-width="2"/><path d="M40 36h34v5H40z" fill="#c4eec8"/><path d="M64 44h9v3h-9z" fill="#3a9a8a"/><svg x="52" y="53" width="30" height="30"><use href="#safari"/></svg></svg></a>
        <a href="#" aria-label="Trash"><svg viewBox="0 0 80 80"><path d="M14 12l8-12 12 6 10-6 14 9 10 6-6 8H18z" fill="#e8e8e8"/><path d="M26 6l8 14M46 4l-6 16M56 8l-5 10" stroke="#555" stroke-width="2"/><path d="M8 14q32 14 64 0l-7 60q-24 10-50 0z" fill="url(#gTrash)"/><path d="M8 14q32-13 64 0" fill="none" stroke="#cfd1d3" stroke-width="2"/></svg></a>
    </nav>
</body>
</html>
```

FILE: styles.css
```css
* {
    box-sizing: border-box;
}
body {
    margin: 0;
    height: 100vh;
    display: flex;
    flex-direction: column;
    overflow: hidden;
    font-family: Inter, "Liberation Sans", sans-serif;
    background: linear-gradient(90deg, #02060f, #040a16 60%, #0b1f33);
}
svg {
    display: block;
    flex: none;
}
a {
    text-decoration: none;
    color: inherit;
}
button {
    margin: 0;
    padding: 0;
    border: 0;
    background: none;
    font: inherit;
    color: inherit;
    cursor: pointer;
}
input {
    font: inherit;
    color: inherit;
    outline: 0;
}
.defs {
    position: absolute;
}

/* menu bar */
.menubar {
    display: flex;
    justify-content: space-between;
    align-items: center;
    height: 46px;
    flex: none;
    padding: 0 46px 2px 40px;
    background: linear-gradient(90deg, #1e2a42, #181d2d);
    border-bottom: 1px solid #000;
    color: #fff;
    font-size: 27px;
}
.menus {
    display: flex;
    align-items: center;
    gap: 38px;
}
.apple {
    fill: #fff;
}
.app-name {
    font-weight: 700;
}
.status {
    display: flex;
    align-items: center;
    gap: 28px;
}
.battery {
    display: flex;
    align-items: center;
    gap: 8px;
    margin-left: -4px;
    font-size: 24px;
}
.clock {
    padding: 0 20px 0 10px;
}

/* browser window */
.window {
    flex: 1;
    min-height: 0;
    display: flex;
    flex-direction: column;
    margin-bottom: 10px;
    border: 2px solid #5b5c5e;
    border-bottom-width: 0;
    border-radius: 10px;
    overflow: hidden;
    background: #35363a;
}
.tab-strip {
    display: flex;
    height: 82px;
    flex: none;
    padding-top: 14px;
    background: #202124;
}
.lights {
    display: flex;
    align-items: center;
    gap: 16px;
    width: 157px;
    padding: 0 0 14px 24px;
}
.lights i {
    width: 24px;
    height: 24px;
    border-radius: 50%;
}
.red {
    background: #ec6a5e;
}
.yellow {
    background: #e1c04c;
}
.green {
    background: #71be47;
}
.tabs {
    flex: 1;
    display: flex;
    min-width: 0;
}
.tab {
    flex: 1;
    min-width: 0;
    display: flex;
    align-items: center;
    padding: 0 22px;
    color: #bdc1c6;
    font-size: 24px;
    background: linear-gradient(#5f6368, #5f6368) right center / 2px 40px no-repeat;
}
.tab .title {
    flex: 1;
    min-width: 0;
    margin: 0 12px 0 16px;
    overflow: hidden;
    white-space: nowrap;
    mask-image: linear-gradient(90deg, #000 76%, transparent);
}
.tab button svg {
    width: 18px;
    height: 18px;
}
.tab.before-active {
    background: none;
}
.tab.active {
    background: #35363a;
    border-radius: 16px 16px 0 0;
    color: #fff;
}
.favicon {
    width: 32px;
    height: 32px;
}
.etsy {
    font: 30px "Liberation Serif", serif;
    fill: #fff;
    text-anchor: middle;
}
.asu {
    font: italic 900 15px Inter, sans-serif;
    fill: #8c1d40;
    text-anchor: middle;
}
.new-tab {
    width: 170px;
    padding-left: 31px;
}

.toolbar {
    display: flex;
    align-items: center;
    height: 72px;
    flex: none;
    padding: 0 26px 0 29px;
    font-size: 28px;
}
.nav-buttons {
    display: flex;
    gap: 36px;
    width: 185px;
}
.omnibox {
    flex: 1;
    display: flex;
    align-items: center;
    height: 56px;
    padding: 0 22px 0 26px;
    border-radius: 28px;
    background: #202124;
    color: #fff;
}
.omnibox label {
    margin-left: 24px;
}
.omnibox input {
    flex: 1;
    min-width: 0;
    padding: 0;
    border: 0;
    background: none;
    color: #95979a;
}
.extension {
    margin-left: 28px;
    padding-right: 26px;
    border-right: 2px solid #5f6368;
    color: #8a8b8e;
    font: 700 26px Roboto, sans-serif;
}
.profile {
    display: flex;
    align-items: center;
    gap: 16px;
    height: 56px;
    margin: 0 20px 0 16px;
    padding: 0 20px 0 4px;
    border: 2px solid #8ab4f8;
    border-radius: 28px;
    background: #2d303a;
    color: #8ab4f8;
    font-size: 25px;
}
.avatar {
    width: 44px;
    height: 44px;
    border-radius: 50%;
    background: #b3285a;
    color: #fff;
    font-size: 24px;
    line-height: 44px;
}

.bookmarks {
    display: flex;
    align-items: center;
    gap: 33px;
    height: 66px;
    flex: none;
    padding: 0 38px 8px 26px;
    border-bottom: 2px solid #232426;
    color: #fff;
    font-size: 23px;
}
.bookmarks a {
    display: flex;
    align-items: center;
    gap: 16px;
    white-space: nowrap;
}
.bookmarks svg {
    width: 32px;
    height: 32px;
}
.bookmarks .cut span {
    width: 227px;
}
.bookmarks button {
    margin-left: auto;
}

/* course page */
.page {
    flex: 1;
    min-height: 0;
    display: flex;
    font-family: "Open Sans", "Noto Sans", sans-serif;
    background: #fff;
}
.rail {
    display: flex;
    flex-direction: column;
    width: 118px;
    background: #25282d;
}
.rail a,
.rail button {
    display: flex;
    align-items: center;
    justify-content: center;
    height: 88px;
    padding-right: 10px;
}
.rail .expand {
    height: 90px;
    padding: 0 0 0 4px;
    background: #18191d;
}
.rail svg {
    height: 36px;
}
.rail .line {
    border-bottom: 2px solid #403f41;
}
.rail .wide {
    width: 46px;
}
.course {
    flex: 1;
    min-width: 0;
    display: flex;
    flex-direction: column;
    background: linear-gradient(transparent, #f0f0f0) bottom / 100% 60px no-repeat;
}
.course-bar {
    display: flex;
    align-items: center;
    justify-content: space-between;
    height: 88px;
    padding: 0 0 0 30px;
    border-bottom: 2px solid #ddd;
}
.brand {
    display: flex;
    align-items: center;
    color: #12355f;
    font-size: 30px;
}
.brand span {
    margin-left: 9px;
    line-height: 44px;
}
.brand .product {
    margin-left: 19px;
    padding-left: 16px;
    border-left: 2px solid #12355f;
}
.search {
    display: flex;
    align-items: center;
    gap: 20px;
}
.search input {
    width: 276px;
    padding: 2px 0 0;
    border: 0;
    background: none;
    font-size: 28px;
}
.search input::placeholder {
    color: #757575;
}
.title-bar {
    display: flex;
    align-items: center;
    gap: 48px;
    height: 80px;
    padding: 0 26px 0 30px;
    border-bottom: 2px solid #ddd;
    background: #f7f7f7;
}
.title-bar h1 {
    flex: 1;
    margin: 0;
    color: #444;
    font-size: 30px;
    font-weight: 400;
}
.exam {
    flex: 1;
    padding: 36px 0 0 44px;
    background: linear-gradient(#e8ecee, #fff 40%, #fff 60%, #eef0f0) top / 100% 20px no-repeat;
}
.back {
    display: block;
    margin-left: -24px;
    line-height: 36px;
    color: #25608f;
    font-size: 28px;
}
.attempts {
    display: flex;
    align-items: center;
    height: 48px;
    margin: 44px 0 0 -4px;
    color: #444;
    font-size: 28px;
}
.attempts b {
    font: 700 24px "Liberation Sans", Arial, sans-serif;
}
.attempt-box {
    display: flex;
    align-items: center;
    justify-content: center;
    width: 76px;
    height: 48px;
    margin: 0 72px 0 20px;
    padding: 6px 0 0 4px;
    border: 2px solid #757575;
}
.score {
    margin-left: 22px;
}
.exam h2 {
    margin: 60px 0 0;
    color: #12355f;
    font: 700 24px/36px Verdana, "DejaVu Sans", sans-serif;
}
.exam p {
    width: 1830px;
    margin: 36px 0 0;
    font: 24px/48px Verdana, "DejaVu Sans", sans-serif;
}
.exam table {
    width: 1326px;
    margin-top: 96px;
    border-collapse: collapse;
    table-layout: fixed;
    font: 24px/36px Verdana, "DejaVu Sans", sans-serif;
}
.exam th {
    width: 258px;
    padding: 0;
}
.exam th:first-child {
    width: 286px;
    padding-left: 20px;
    text-align: left;
}
.exam th:last-child {
    width: 266px;
}
.exam thead th {
    height: 48px;
    border-bottom: 2px solid #000;
}
.exam tbody th {
    font-weight: 400;
}
.exam td {
    height: 64px;
    padding: 0;
    text-align: center;
}
.exam tbody tr > * {
    padding-top: 8px;
    vertical-align: top;
}
.exam td input {
    display: block;
    width: 200px;
    height: 58px;
    margin: -6px auto 0;
    border: 1px solid #bbb;
    box-shadow: inset 0 0 0 1px #eee;
}
.exam td .f-value {
    width: 208px;
}
.actions {
    display: flex;
    flex-direction: column;
    align-items: flex-start;
    margin: 54px 0 0 1492px;
    color: #25608f;
    font-size: 28px;
}
.actions button {
    height: 74px;
    padding: 0 32px;
    border-radius: 6px;
    background: #246192;
    color: #fff;
    font-weight: 600;
}
.actions a {
    margin-top: 14px;
    line-height: 36px;
}

.apps {
    display: flex;
    flex-direction: column;
    width: 112px;
    border-left: 2px solid #ddd;
    background: #585858;
}
.help {
    display: flex;
    align-items: center;
    justify-content: center;
    height: 88px;
    flex: none;
    border-bottom: 2px solid #ddd;
    background: #fff;
}
.app-list {
    flex: 1;
    min-height: 0;
    display: flex;
    flex-direction: column;
    align-items: center;
    gap: 42px;
    padding: 26px 0 0 6px;
    overflow: hidden;
}
.app-list svg {
    width: 64px;
    height: 64px;
}
.bongo {
    font: 700 17px Lato, sans-serif;
    fill: #fff;
    text-anchor: middle;
}
.byline {
    font: 5px Lato, sans-serif;
    fill: #fff;
    text-anchor: middle;
}
.az {
    font: 700 30px "Liberation Serif", serif;
    fill: #3b3012;
    text-anchor: middle;
}
.more {
    display: flex;
    justify-content: center;
    height: 60px;
    flex: none;
    padding-left: 4px;
    background: #2b2b2b;
}

/* dock */
.dock {
    display: flex;
    align-self: center;
    height: 112px;
    flex: none;
    padding: 10px 3px 0;
    border: 2px solid #3c444b;
    border-bottom: 0;
    border-radius: 10px 10px 0 0;
    background: #181f2b;
}
.dock a {
    position: relative;
    width: 94px;
    padding: 1px 7px 0;
}
.dock a > svg {
    width: 80px;
    height: 80px;
    overflow: visible;
}
.dock .open::after {
    content: "";
    display: block;
    width: 8px;
    height: 8px;
    margin: 7px auto 0;
    border-radius: 50%;
    background: #9ba1ad;
}
.dock hr {
    width: 2px;
    height: 84px;
    margin: 2px 20px 0;
    border: 0;
    background: #555c66;
}
.badge {
    position: absolute;
    top: -4px;
    right: 4px;
    min-width: 34px;
    height: 34px;
    border-radius: 17px;
    background: #e24b3d;
    color: #fff;
    font-size: 22px;
    line-height: 34px;
    text-align: center;
}
.badge.wide {
    width: 42px;
    font-size: 20px;
}
.petals rect {
    mix-blend-mode: multiply;
}
.cal-month {
    font: 17px Inter, sans-serif;
    fill: #fff;
    text-anchor: middle;
}
.cal-day {
    font: 40px Inter, sans-serif;
    fill: #222;
    text-anchor: middle;
}
.threed {
    font: 12px Inter, sans-serif;
    fill: #222;
    text-anchor: middle;
}
.pages {
    font: 10px Inter, sans-serif;
    fill: #fff;
    text-anchor: middle;
}
.keynote {
    font: 700 5px Inter, sans-serif;
    fill: #222;
}
.tv {
    font: 600 26px Inter, sans-serif;
    fill: #fff;
    text-anchor: middle;
}
```
